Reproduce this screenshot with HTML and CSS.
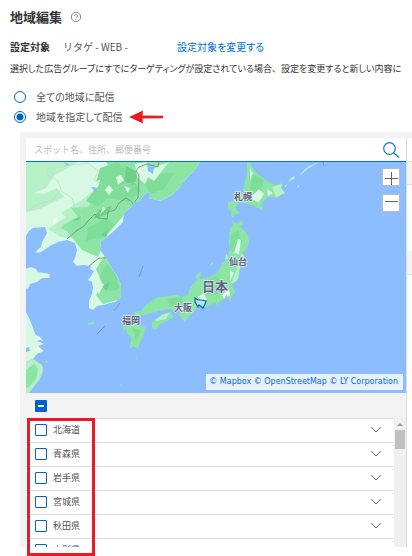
FILE: index.html
```html
<!DOCTYPE html>
<html lang="ja">
<head>
<meta charset="utf-8">
<meta name="viewport" content="width=device-width, initial-scale=1">
<title>地域編集</title>
<link rel="stylesheet" href="styles.css">
</head>
<body>
<main class="page">
  <header class="heading">
    <h1>地域編集</h1>
    <button class="help" type="button" aria-label="ヘルプ">
      <svg viewBox="0 0 12 12" width="12" height="12"><circle cx="6" cy="6" r="4.7"/><path d="M4.500 5c0-2 3-2 3 0 0 1-1.500.9-1.500 2M6 8v.8"/></svg>
    </button>
  </header>
  <div class="target">
    <strong>設定対象</strong>
    <span class="target-name">リタゲ - WEB -</span>
    <a href="#">設定対象を変更する</a>
  </div>
  <p class="note">選択した広告グループにすでにターゲティングが設定されている場合<span class="full">、</span>設定を変更すると新しい内容に</p>
  <div class="choices">
    <label class="choice"><input type="radio" name="area"><span>全ての地域に配信</span></label>
    <label class="choice"><input type="radio" name="area" checked><span>地域を指定して配信</span>
      <svg class="arrow" viewBox="0 0 34 14" width="34" height="14"><path d="M0 7 14 0.500 13.500 5.500 34 5.800V8.200L13.500 8.500 14 13.500z"/></svg>
    </label>
  </div>

  <section class="panel">
    <div class="widget">
      <div class="search">
        <input type="text" aria-label="地域を検索" placeholder="スポット名、住所、郵便番号">
        <button type="button" aria-label="検索"><svg viewBox="0 0 18 18" width="18" height="18"><circle cx="7.500" cy="7.500" r="5.800"/><path d="M11.700 11.700 17 16.500"/></svg></button>
      </div>
      <div class="map">
        <svg class="map-art" viewBox="26 162 380 231" preserveAspectRatio="xMidYMid slice">
          <defs>
            <clipPath id="main-land"><path d="M26 162V236L29 231 33 228 45 227 47 233 42 242 41 247 36 251 37 253 41 252 50 246 58 242 67 240 75 243 77 250 75 258 73 262 77 266 83 265 91 266 90 269 94 271 91 276 88 280 92 282 93 287 92 294 89 301 89 308 93 310 97 306 103 305 110 303 115 302 121 297 121 285 117 276 111 267 106 258 100 250 101 241 108 236 115 230 123 222 124 213 131 207 135 202 140 201 143 196 147 192 151 194 149 198 160 201 172 195 179 188 185 180 193 172 200 162z"/></clipPath>
            <clipPath id="islands"><path d="M247 162 250 163 254 170 260 176 267 181 274 185 279 184 283 180 281 188 285 193 281 195 277 198 268 197 262 203 263 211 258 208 252 205 244 203 239 202 235 207 237 210 240 213 235 215 232 218 231 211 228 208 228 202 233 201 235 197 243 192 245 182 247 173zM230 228 233 226 232 221 237 224 242 220 243 225 239 226 244 230 248 236 249 243 246 250 243 252 245 260 241 266 239 272 238 279 232 285 235 292 231 299 228 300 227 294 224 299 218 304 219 308 215 303 207 307 198 307 192 314 188 317 185 322 180 317 178 311 168 309 155 312 145 315 137 315 147 304 158 297 168 296 177 295 181 297 188 295 190 287 198 280 195 276 201 271 200 279 210 277 217 273 223 263 226 260 230 250 229 242zM152 322 162 315 170 312 174 317 167 321 160 324 156 330 152 328zM124 325 133 321 139 325 145 327 144 335 140 342 138 349 134 346 130 349 131 338 127 333z"/></clipPath>
          </defs>
          <rect class="sea" x="26" y="162" width="380" height="231"/>
          <g clip-path="url(#main-land)">
            <rect class="pale" x="26" y="162" width="180" height="155"/>
            <path class="light" d="M26 162H78L55 175 46 188 34 193 44 194 57 188 64 197 40 209 26 212zM61 213 83 199 94 190 102 171 110 162H145L139 191 109 215 97 229 82 239 61 237 48 229 66 217z"/>
            <path class="green" d="M106 162H200V202H146L134 207 124 215 107 235 98 257 82 250 70 235 63 225 78 217 71 208 88 207 99 192 96 180 114 174zM60 228 75 218 80 224 67 231zM105 255 123 285 121 299 103 304 96 295 102 284 96 269z"/>
            <path class="mid" d="M100 168 118 162 126 171 119 183 133 179 141 191 128 202 107 198 98 207 86 201 94 191zM88 228 106 218 115 225 101 238 86 241zM107 263 117 277 119 289 111 291 103 286 100 276zM145 183 157 174 174 173 164 189 150 194z"/>
            <path class="dark" d="M126 166 139 173 134 185 124 181zM99 210 112 206 108 214 93 219zM101 235 109 229 106 237zM102 287 110 281 107 291zM72 221 81 216 79 220z"/>
            <path class="pale" d="M116 177 121 175 124 180 118 185zM105 190 109 185 113 190 109 195zM135 164 146 162 151 171 145 184 137 177zM92 182 100 180 98 187 92 190zM145 175 158 166 169 162 154 181zM124 186 130 188 128 193zM103 207 106 209 100 214zM93 282 104 284 99 294 94 289z"/>
            <path class="white-land" d="M53 219 59 218 54 224zM136 170 141 168 139 174z"/>
            <path class="sea" d="M64 162 70 165 67 166zM91 187 95 187 98 193 96 193zM147 164 154 165 153 174 148 171zM74 231 79 228 77 231z"/>
            <path class="province" d="M26 212 37 205 53 200 61 189 57 180 47 175 48 168M61 191 72 198 75 208 82 216 82 225M64 166 88 163 98 171 94 180 103 185M112 191 123 185 137 182M81 209 86 202"/>
            <path class="border" d="M67 239 75 232 84 226 88 221 95 214 98 218 107 219 108 212 115 210 119 203 126 198 132 202 135 208 135 201 138 198 139 175 136 171 139 167 147 164 158 167 159 162M88 267 94 262 99 258 109 258"/>
          </g>
          <path class="pale" d="M26 269 31 267 36 269 38 272 50 274 49 278 42 278 37 282 30 284 28 289 26 288zM26 312 29 318 32 325 35 334 42 339 37 341 44 344 38 346 44 351 37 354 33 359 26 362z"/>
          <path class="light" d="M26 362 33 359 42 365 43 370 40 379 35 385 29 393H26z"/>
          <path class="green" d="M26 370 34 364 38 369 36 379 29 387 26 388zM88 323 94 321 95 324 88 325z"/>
          <path class="white-land" d="M39 336 43 341 38 339zM37 346 43 351 36 349z"/>
          <path class="sea" d="M26 348 29 347 30 351 26 352z"/>
          <g clip-path="url(#islands)">
            <rect class="green" x="120" y="162" width="170" height="190"/>
            <path class="mid" d="M253 174 264 180 260 193 250 190zM231 235 238 230 242 242 235 252 229 250zM205 281 217 276 225 284 218 294 207 295zM167 299 182 297 184 304 170 307zM132 327 141 331 136 341z"/>
            <path class="pale" d="M259 189 264 194 259 202 249 199zM250 168 253 173 250 180zM267 189 273 193 268 196zM238 239 241 240 239 254 234 253zM230 270 234 273 230 281zM198 297 204 293 207 300 202 303zM178 309 187 307 183 312z"/>
            <path class="light" d="M272 187 282 184 286 193 276 197zM242 253 247 260 239 270 239 282 231 283 237 269zM153 316 170 312 166 319 156 321z"/>
            <path class="white-land" d="M222 295 229 290 230 295 227 297 224 299z"/>
          </g>
          <path class="light" d="M284 187 286 185 287 184 286 187zM288 182 291 178 295 176 294 179 290 181zM299 176 304 170 309 166 319 162 314 165 309 168 303 173zM297 187 299 185 299 187zM210 265 213 262 213 264zM208 270 210 268zM225 260 226 253 228 258z"/>
          <path class="green" d="M134 312 139 311 141 315 136 317zM44 363 47 360 48 363zM130 360 132 359 131 361zM136 358 137 356 137 359zM120 385 122 383 121 387zM123 326 126 329 123 331z"/>
          <path class="boundary" d="M114 311 120 303M97 334 105 326M139 277 143 266M323 162 324 166"/>
          <path class="region" d="M195 298 198 300 201 300 206 301 205 304 203 308 199 305 198 307 195 302z"/>
          <g class="places">
            <text x="234" y="200">札幌</text>
            <text x="229" y="265">仙台</text>
            <text x="174" y="311">大阪</text>
            <text x="122" y="324">福岡</text>
            <text class="country" x="202" y="291">日本</text>
          </g>
        </svg>
        <div class="zoom">
          <button type="button" aria-label="拡大"><svg viewBox="0 0 18 18" width="18" height="18"><path d="M3 10.500H16M9.500 4V17"/></svg></button>
          <button type="button" aria-label="縮小"><svg viewBox="0 0 18 18" width="18" height="18"><path d="M3 7.500H16"/></svg></button>
        </div>
        <div class="credit"><a href="#">© Mapbox</a> <a href="#">© OpenStreetMap</a> <a href="#">© LY Corporation</a></div>
      </div>
      <div class="all"><button type="button" aria-label="すべて選択"></button></div>
      <div class="regions">
        <ul>
          <li><label><input type="checkbox">北海道</label><button type="button" aria-label="開く"><svg viewBox="0 0 12 8" width="12" height="8"><path d="M1 1 6 6 11 1"/></svg></button></li>
          <li><label><input type="checkbox">青森県</label><button type="button" aria-label="開く"><svg viewBox="0 0 12 8" width="12" height="8"><path d="M1 1 6 6 11 1"/></svg></button></li>
          <li><label><input type="checkbox">岩手県</label><button type="button" aria-label="開く"><svg viewBox="0 0 12 8" width="12" height="8"><path d="M1 1 6 6 11 1"/></svg></button></li>
          <li><label><input type="checkbox">宮城県</label><button type="button" aria-label="開く"><svg viewBox="0 0 12 8" width="12" height="8"><path d="M1 1 6 6 11 1"/></svg></button></li>
          <li><label><input type="checkbox">秋田県</label><button type="button" aria-label="開く"><svg viewBox="0 0 12 8" width="12" height="8"><path d="M1 1 6 6 11 1"/></svg></button></li>
          <li><label><input type="checkbox">山形県</label><button type="button" aria-label="開く"><svg viewBox="0 0 12 8" width="12" height="8"><path d="M1 1 6 6 11 1"/></svg></button></li>
        </ul>
        <div class="scrollbar"><span class="up"></span><span class="thumb"></span></div>
        <div class="highlight"></div>
      </div>
    </div>
    <div class="side"><i class="gap-a"></i><i class="bar-a"></i><i class="gap-b"></i><i class="bar-b"></i></div>
  </section>
</main>
</body>
</html>
```
FILE: styles.css
```css
* { box-sizing: border-box; }

body {
  margin: 0;
  min-height: 100vh;
  background: #fff;
  color: #333;
  font: 10px/16px "Noto Sans CJK JP", sans-serif;
  font-feature-settings: "palt";
}

button { padding: 0; border: 0; background: none; font: inherit; display: block; }
svg { display: block; fill: none; }
a { color: #0070d2; text-decoration: none; }
input { margin: 0; }

.page { padding: 7px 0 9px; }

.heading { display: flex; align-items: center; gap: 8px; padding-left: 10px; }
h1 { margin: 0; font-size: 13px; line-height: 20px; font-weight: 700; font-feature-settings: normal; }
.help svg { stroke: #666; stroke-width: 0.8; }

.target { display: flex; padding: 12px 0 0 10px; line-height: 16px; }
.target strong { font-weight: 700; width: 53px; }
.target-name { width: 114px; color: #555; font-feature-settings: normal; }

.note {
  margin: 6px 0 0;
  padding-left: 10px;
  font-size: 9px;
  line-height: 16px;
  white-space: nowrap;
  overflow: hidden;
}
.full { font-feature-settings: normal; }

.choices { padding: 10px 0 0 14px; }
.choice { display: flex; align-items: center; height: 20px; color: #555; }
.choice span { margin-left: 10px; }
.choice input {
  appearance: none;
  width: 12px;
  height: 12px;
  border: 1px solid #0066cc;
  border-radius: 50%;
}
.choice input:checked { background: radial-gradient(circle, #0062cc 3px, #fff 4px); }
.arrow { margin-left: 6px; fill: #e81c22; }

.panel {
  display: flex;
  margin: 5px 0 0 20px;
  padding: 6px 0 0 6px;
  background: #f3f3f3;
}
.widget { flex: 1; min-width: 0; border-right: 1px solid #ddd; }

.search { display: flex; height: 24px; background: #fff; border-bottom: 1px solid #0070d2; }
.search input {
  flex: 1;
  min-width: 0;
  border: 0;
  outline: 0;
  padding: 0 8px;
  font: inherit;
  font-size: 9px;
  font-feature-settings: "palt" 0;
  background: none;
}
.search input::placeholder { color: #bbb; opacity: 1; }
.search button { display: grid; place-items: center; width: 30px; }
.search svg { stroke: #1473cc; stroke-width: 1.2; }

.map { position: relative; height: 231px; background: #8bbdff; overflow: hidden; }
.map-art { width: 100%; height: 100%; }
.sea { fill: #8bbdff; }
.pale { fill: #d7f8e3; }
.light { fill: #b5f0c7; }
.green { fill: #8ce5a5; }
.mid { fill: #7edd99; }
.dark { fill: #6ed08a; }
.white-land { fill: #f3fff7; }
.province { stroke: #c2d5bf; stroke-width: 0.6; }
.border { stroke: #829d88; stroke-width: 1; }
.boundary { stroke: #7891b0; stroke-width: 0.8; }
.region { fill: #b8e5df; stroke: #0864c0; stroke-width: 1.2; }
.places {
  fill: #5c6480;
  stroke: #dfeaf0;
  stroke-width: 1.5;
  paint-order: stroke;
  font-size: 9px;
  font-weight: 700;
  font-feature-settings: normal;
}
.country { font-size: 13px; }

.zoom { position: absolute; top: 6px; right: 6px; display: grid; gap: 8px; }
.zoom button { width: 18px; height: 18px; background: #fff; box-shadow: inset 0 0 0 1px #bbb; }
.zoom svg { stroke: #666; stroke-width: 1; }

.credit {
  position: absolute;
  right: 3px;
  bottom: 3px;
  padding: 0 5px 0 3px;
  background: #e8f1ff;
  font: 8px/16px "DejaVu Sans", sans-serif;
  white-space: nowrap;
}

.all { display: flex; align-items: center; height: 25px; padding-left: 9px; }
.all button { display: grid; place-items: center; width: 12px; height: 12px; border-radius: 1px; background: #0062cc; }
.all button::before { content: ""; width: 6px; height: 2px; background: #fff; }

.regions { position: relative; display: flex; height: 129px; background: #fff; }
.regions ul { flex: 1; margin: 0; padding: 0; list-style: none; overflow: hidden; }
.regions li {
  display: flex;
  justify-content: space-between;
  height: 24px;
  padding: 0 12px 1px 9px;
  border-top: 1px solid #ddd;
}
.regions label { display: flex; align-items: center; gap: 6px; font-size: 9px; color: #555; }
.regions input { appearance: none; width: 12px; height: 12px; border: 1px solid #0066cc; border-radius: 1px; }
.regions svg { stroke: #777; stroke-width: 1; }

.scrollbar { display: flex; flex-direction: column; align-items: center; width: 12px; background: #f0f0f0; }
.up { margin: 5px 0 4px; border: 3px solid transparent; border-top: 0; border-bottom-color: #999; }
.thumb { width: 10px; height: 19px; background: #c1c1c1; }

.highlight {
  position: absolute;
  top: 0;
  left: 1px;
  width: 68px;
  height: 138px;
  border: 3px solid #e81c22;
  pointer-events: none;
}

.side { display: flex; flex-direction: column; width: 5px; background: #fff; }
.gap-a { height: 23px; }
.gap-b { height: 66px; }
.bar-a, .bar-b { background: #f3f3f3; border-bottom: 1px solid #ddd; }
.bar-a { height: 24px; border-top: 1px solid #ddd; }
.bar-b { height: 24px; }
```
